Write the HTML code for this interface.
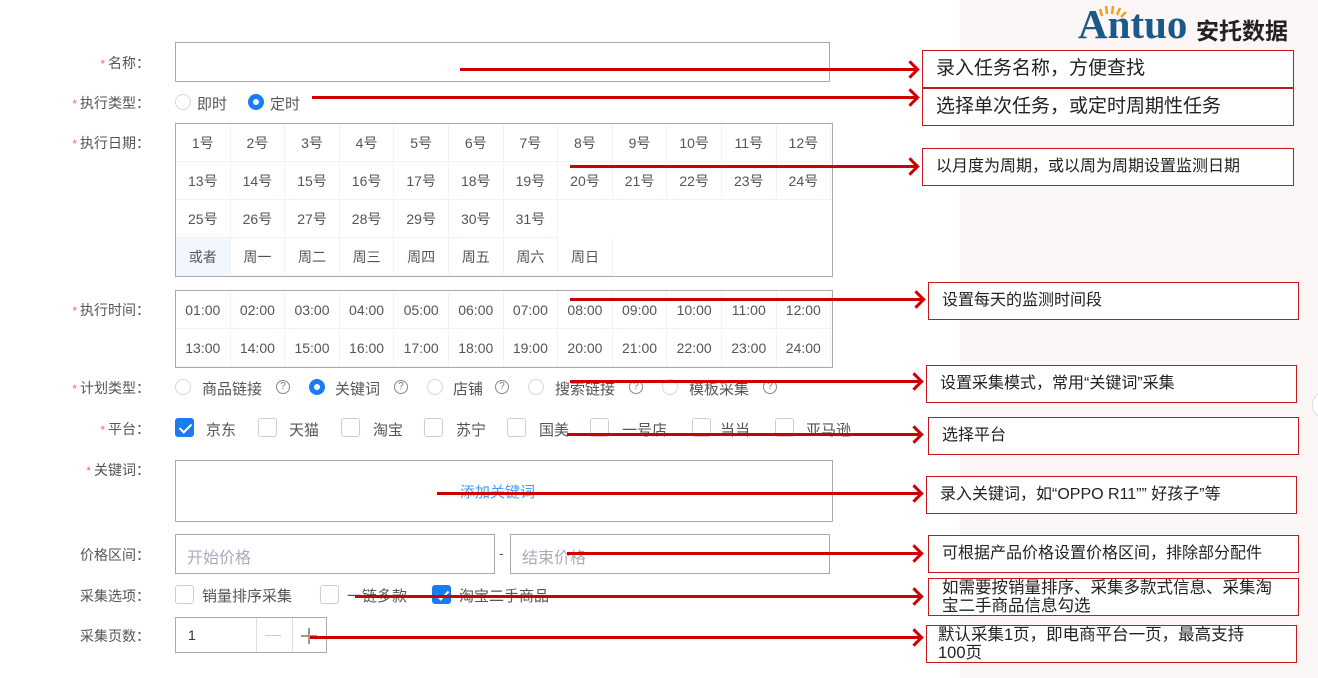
<!DOCTYPE html>
<html><head><meta charset="utf-8">
<style>
*{margin:0;padding:0;box-sizing:border-box}
body{width:1318px;height:678px;position:relative;overflow:hidden;background:#fff;font-family:"Liberation Sans","Noto Sans CJK SC",sans-serif;color:#555;font-size:14px}
.a{position:absolute;white-space:nowrap}
.pink{position:absolute;left:960px;top:0;width:358px;height:678px;background:#fcf6f6}
.lbl{position:absolute;right:1168px;font-size:14px;color:#555;white-space:nowrap}
.lbl i{color:#f56c6c;font-style:normal;font-size:12px;margin-right:3px}
.inp{position:absolute;border:1px solid #aaa;background:#fff}
.grid{position:absolute;border:1px solid #aaa;background:#fff;display:grid;grid-template-columns:repeat(12,54.6px)}
.grid div{height:38px;line-height:38px;text-align:center;border-right:1px solid #eef3fb;border-bottom:1px solid #eef3fb;color:#555;font-size:14px}
.radio{position:absolute;width:16px;height:16px;border:1px solid #d4d8e0;border-radius:50%;background:#fff}
.radio.on{border:5px solid #1a7cf5}
.q{position:absolute;width:14px;height:14px;border:1px solid #888;border-radius:50%;font-size:10px;line-height:12px;text-align:center;color:#777}
.cb{position:absolute;width:19px;height:19px;border:1px solid #ccd;border-radius:3px;background:#fff}
.cb.on{background:#1a7cf5;border-color:#1a7cf5}
.cb.on:after{content:"";position:absolute;left:6px;top:2px;width:5px;height:10px;border:solid #fff;border-width:0 2px 2px 0;transform:rotate(45deg)}
.box{position:absolute;border:1.5px solid #c8181e;background:#fff;color:#222;font-size:16px;padding-left:13px;white-space:nowrap}
.box span{display:block;white-space:normal}
.ln{position:absolute;height:3px;background:#c00}
.ar{position:absolute;width:13px;height:13px;border-right:3px solid #c00;border-top:3px solid #c00;transform:rotate(45deg)}
</style></head><body>
<div class="pink"></div>

<!-- logo -->
<div class="a" style="left:1078px;top:0px;font-family:'Liberation Serif',serif;font-weight:bold;font-size:41px;color:#1b5a88;letter-spacing:0px">Antuo</div>
<svg class="a" style="left:1098px;top:4px" width="30" height="14"><g stroke="#f0a020" stroke-width="2.5"><line x1="4" y1="12" x2="2" y2="5"/><line x1="9" y1="10" x2="8" y2="2"/><line x1="14" y1="10" x2="15" y2="2"/><line x1="19" y1="11" x2="22" y2="4"/><line x1="23" y1="13" x2="28" y2="8"/></g></svg>
<div class="a" style="left:1196px;top:12px;font-size:23px;font-weight:bold;color:#222">安托数据</div>

<!-- labels -->
<div class="lbl" style="top:53px"><i>*</i>名称：</div>
<div class="lbl" style="top:93px"><i>*</i>执行类型：</div>
<div class="lbl" style="top:133px"><i>*</i>执行日期：</div>
<div class="lbl" style="top:300px"><i>*</i>执行时间：</div>
<div class="lbl" style="top:378px"><i>*</i>计划类型：</div>
<div class="lbl" style="top:419px"><i>*</i>平台：</div>
<div class="lbl" style="top:460px"><i>*</i>关键词：</div>
<div class="lbl" style="top:545px">价格区间：</div>
<div class="lbl" style="top:586px">采集选项：</div>
<div class="lbl" style="top:626px">采集页数：</div>

<div class="inp" style="left:175px;top:42px;width:655px;height:40px"></div>

<div class="radio" style="left:175px;top:94px"></div><div class="a" style="left:197px;top:93px;font-size:15px">即时</div>
<div class="radio on" style="left:248px;top:94px"></div><div class="a" style="left:270px;top:93px;font-size:15px">定时</div>

<div class="grid" style="left:175px;top:123px;width:658px;height:154px">
<div>1号</div><div>2号</div><div>3号</div><div>4号</div><div>5号</div><div>6号</div><div>7号</div><div>8号</div><div>9号</div><div>10号</div><div>11号</div><div>12号</div>
<div>13号</div><div>14号</div><div>15号</div><div>16号</div><div>17号</div><div>18号</div><div>19号</div><div>20号</div><div>21号</div><div>22号</div><div>23号</div><div>24号</div>
<div>25号</div><div>26号</div><div>27号</div><div>28号</div><div>29号</div><div>30号</div><div>31号</div><div style="border:0"></div><div style="border:0"></div><div style="border:0"></div><div style="border:0"></div><div style="border:0"></div>
<div style="background:#f2f7fd">或者</div><div>周一</div><div>周二</div><div>周三</div><div>周四</div><div>周五</div><div>周六</div><div>周日</div><div style="border:0"></div><div style="border:0"></div><div style="border:0"></div><div style="border:0"></div>
</div>

<div class="grid" style="left:175px;top:290px;width:658px;height:78px">
<div>01:00</div><div>02:00</div><div>03:00</div><div>04:00</div><div>05:00</div><div>06:00</div><div>07:00</div><div>08:00</div><div>09:00</div><div>10:00</div><div>11:00</div><div>12:00</div>
<div>13:00</div><div>14:00</div><div>15:00</div><div>16:00</div><div>17:00</div><div>18:00</div><div>19:00</div><div>20:00</div><div>21:00</div><div>22:00</div><div>23:00</div><div>24:00</div>
</div>

<!-- plan type -->
<div class="radio" style="left:175px;top:379px"></div><div class="a" style="left:202px;top:378px;font-size:15px">商品链接</div><div class="q" style="left:276px;top:380px">?</div>
<div class="radio on" style="left:309px;top:379px"></div><div class="a" style="left:335px;top:378px;font-size:15px">关键词</div><div class="q" style="left:394px;top:380px">?</div>
<div class="radio" style="left:427px;top:379px"></div><div class="a" style="left:453px;top:378px;font-size:15px">店铺</div><div class="q" style="left:495px;top:380px">?</div>
<div class="radio" style="left:528px;top:379px"></div><div class="a" style="left:555px;top:378px;font-size:15px">搜索链接</div><div class="q" style="left:629px;top:380px">?</div>
<div class="radio" style="left:662px;top:379px"></div><div class="a" style="left:689px;top:378px;font-size:15px">模板采集</div><div class="q" style="left:763px;top:380px">?</div>

<!-- platform -->
<div class="cb on" style="left:175px;top:418px"></div><div class="a" style="left:206px;top:419px;font-size:15px">京东</div>
<div class="cb" style="left:258px;top:418px"></div><div class="a" style="left:289px;top:419px;font-size:15px">天猫</div>
<div class="cb" style="left:341px;top:418px"></div><div class="a" style="left:373px;top:419px;font-size:15px">淘宝</div>
<div class="cb" style="left:424px;top:418px"></div><div class="a" style="left:456px;top:419px;font-size:15px">苏宁</div>
<div class="cb" style="left:507px;top:418px"></div><div class="a" style="left:539px;top:419px;font-size:15px">国美</div>
<div class="cb" style="left:590px;top:418px"></div><div class="a" style="left:622px;top:419px;font-size:15px">一号店</div>
<div class="cb" style="left:692px;top:418px"></div><div class="a" style="left:720px;top:419px;font-size:15px">当当</div>
<div class="cb" style="left:775px;top:418px"></div><div class="a" style="left:806px;top:419px;font-size:15px">亚马逊</div>

<div class="inp" style="left:175px;top:460px;width:658px;height:62px"></div>
<div class="a" style="left:460px;top:481px;color:#409eff;font-size:15px">添加关键词</div>

<div class="inp" style="left:175px;top:534px;width:320px;height:40px"></div>
<div class="a" style="left:187px;top:544px;color:#aab;font-size:16px">开始价格</div>
<div class="a" style="left:499px;top:545px">-</div>
<div class="inp" style="left:510px;top:534px;width:320px;height:40px"></div>
<div class="a" style="left:522px;top:544px;color:#aab;font-size:16px">结束价格</div>

<div class="cb" style="left:175px;top:585px"></div><div class="a" style="left:202px;top:585px;font-size:15px">销量排序采集</div>
<div class="cb" style="left:320px;top:585px"></div><div class="a" style="left:347px;top:585px;font-size:15px">一链多款</div>
<div class="cb on" style="left:432px;top:585px"></div><div class="a" style="left:459px;top:585px;font-size:15px">淘宝二手商品</div>

<div class="inp" style="left:175px;top:617px;width:152px;height:36px"></div>
<div class="a" style="left:256px;top:618px;width:1px;height:34px;background:#ddd"></div>
<div class="a" style="left:292px;top:618px;width:1px;height:34px;background:#ddd"></div>
<div class="a" style="left:188px;top:627px;color:#333">1</div>
<div class="a" style="left:265px;top:635px;width:16px;height:1px;background:#ccc"></div>
<div class="a" style="left:301px;top:635px;width:16px;height:1.5px;background:#999"></div>
<div class="a" style="left:308px;top:628px;width:1.5px;height:16px;background:#999"></div>

<!-- right edge circle -->
<div class="a" style="left:1312px;top:390px;width:30px;height:30px;border-radius:50%;border:1px solid #ddd;background:#fff"></div>

<!-- annotation lines -->
<div class="ln" style="left:460px;top:68px;width:458px"></div><div class="ar" style="left:904px;top:63px"></div>
<div class="ln" style="left:312px;top:96px;width:606px"></div><div class="ar" style="left:904px;top:91px"></div>
<div class="ln" style="left:570px;top:165px;width:348px"></div><div class="ar" style="left:904px;top:160px"></div>
<div class="ln" style="left:570px;top:298px;width:354px"></div><div class="ar" style="left:910px;top:293px"></div>
<div class="ln" style="left:570px;top:380px;width:352px"></div><div class="ar" style="left:908px;top:375px"></div>
<div class="ln" style="left:567px;top:433px;width:355px"></div><div class="ar" style="left:908px;top:428px"></div>
<div class="ln" style="left:437px;top:492px;width:485px"></div><div class="ar" style="left:908px;top:487px"></div>
<div class="ln" style="left:567px;top:552px;width:355px"></div><div class="ar" style="left:908px;top:547px"></div>
<div class="ln" style="left:355px;top:595px;width:567px"></div><div class="ar" style="left:908px;top:590px"></div>
<div class="ln" style="left:310px;top:636px;width:612px"></div><div class="ar" style="left:908px;top:631px"></div>

<!-- boxes -->
<div class="box" style="left:922px;top:50px;width:372px;height:38px;line-height:35px;font-size:19px">录入任务名称，方便查找</div>
<div class="box" style="left:922px;top:88px;width:372px;height:38px;line-height:35px;font-size:19px">选择单次任务，或定时周期性任务</div>
<div class="box" style="left:922px;top:148px;width:372px;height:38px;line-height:35px">以月度为周期，或以周为周期设置监测日期</div>
<div class="box" style="left:928px;top:282px;width:371px;height:38px;line-height:35px">设置每天的监测时间段</div>
<div class="box" style="left:926px;top:365px;width:371px;height:38px;line-height:35px">设置采集模式，常用“关键词”采集</div>
<div class="box" style="left:928px;top:417px;width:371px;height:38px;line-height:35px">选择平台</div>
<div class="box" style="left:926px;top:476px;width:371px;height:38px;line-height:35px">录入关键词，如“OPPO R11”” 好孩子”等</div>
<div class="box" style="left:928px;top:535px;width:371px;height:38px;line-height:35px">可根据产品价格设置价格区间，排除部分配件</div>
<div class="box" style="left:928px;top:578px;width:371px;height:38px;line-height:18px;font-size:16.5px"><span style="width:335px">如需要按销量排序、采集多款式信息、采集淘宝二手商品信息勾选</span></div>
<div class="box" style="left:926px;top:625px;width:371px;height:38px;line-height:18px;font-size:16.5px;padding-left:11px"><span style="width:322px">默认采集1页，即电商平台一页，最高支持100页</span></div>
</body></html>
